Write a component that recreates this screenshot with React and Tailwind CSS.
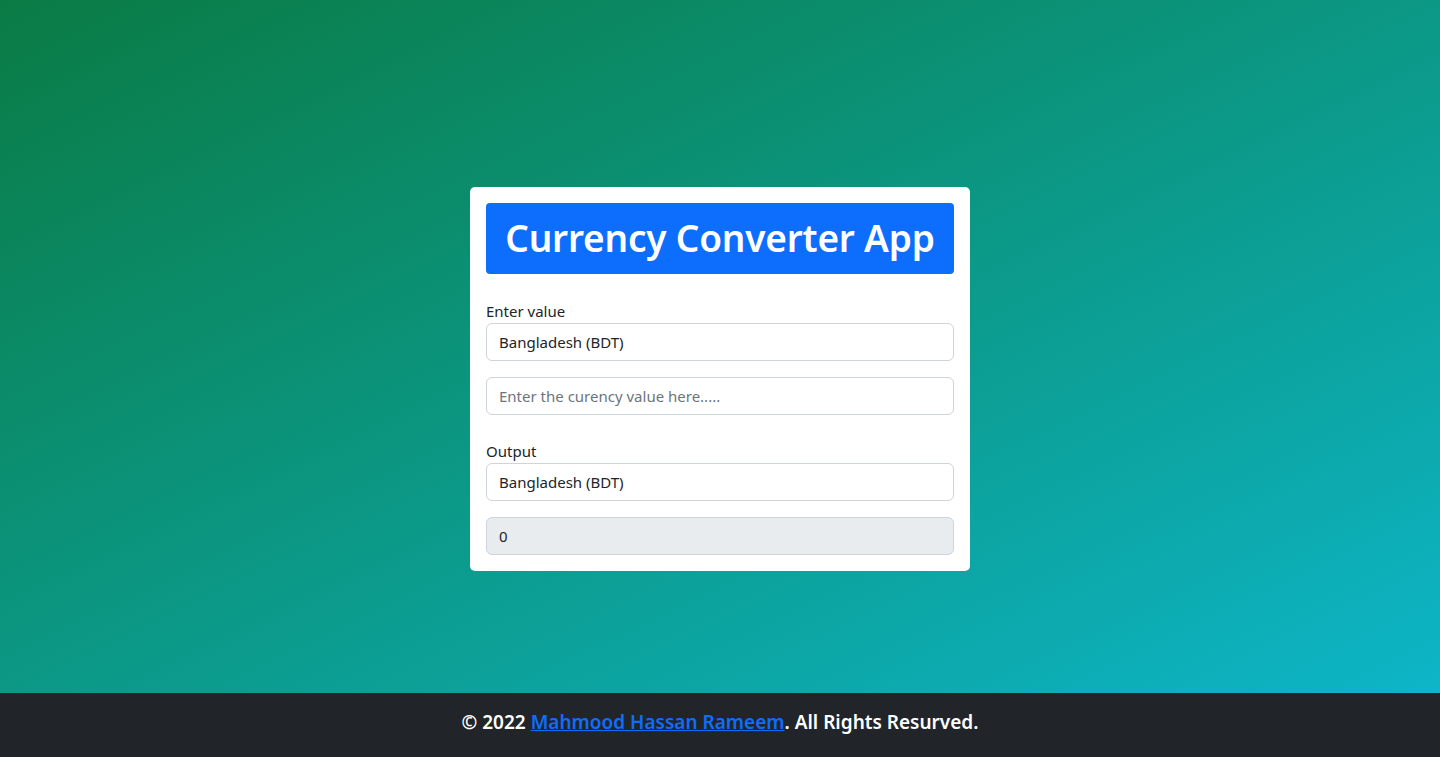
export default function App() {
  const font = { fontFamily: '"Noto Sans", "Open Sans", sans-serif' };
  return (
    <div className="flex min-h-[757px] flex-col" style={font}>
      <main className="flex h-[693px] items-start justify-center bg-[linear-gradient(to_bottom_right,#0a7b44,#0db5c7)] pt-[187px]">
        <div className="w-[500px] rounded-[5px] bg-white p-4">
          <div className="flex h-[71px] items-center justify-center rounded-[4px] bg-[#0d6efd] pb-[3px]">
            <h1 className="text-[37px] font-semibold leading-none tracking-[-0.2px] text-white">Currency Converter App</h1>
          </div>
          <div className="mt-[25px] text-[15px] leading-6 text-[#212529]">Enter value</div>
          <div className="flex h-[38px] items-center rounded-[6px] border border-[#ced4da] px-3 text-[15px] text-[#212529]">Bangladesh (BDT)</div>
          <div className="mt-[16px] flex h-[38px] items-center rounded-[6px] border border-[#ced4da] px-3 text-[15px] text-[#6c757d]">Enter the curency value here.....</div>
          <div className="mt-[24px] text-[15px] leading-6 text-[#212529]">Output</div>
          <div className="flex h-[38px] items-center rounded-[6px] border border-[#ced4da] px-3 text-[15px] text-[#212529]">Bangladesh (BDT)</div>
          <div className="mt-[16px] flex h-[38px] items-center rounded-[6px] border border-[#ced4da] bg-[#e9ecef] px-3 text-[15px] text-[#212529]">0</div>
        </div>
      </main>
      <footer className="flex h-[64px] items-center justify-center bg-[#212529] pb-[6px] text-[19px] font-semibold text-white">
        <span>
          © 2022 <a href="#" className="text-[#0d6efd] underline">Mahmood Hassan Rameem</a>. All Rights Resurved.
        </span>
      </footer>
    </div>
  );
}
